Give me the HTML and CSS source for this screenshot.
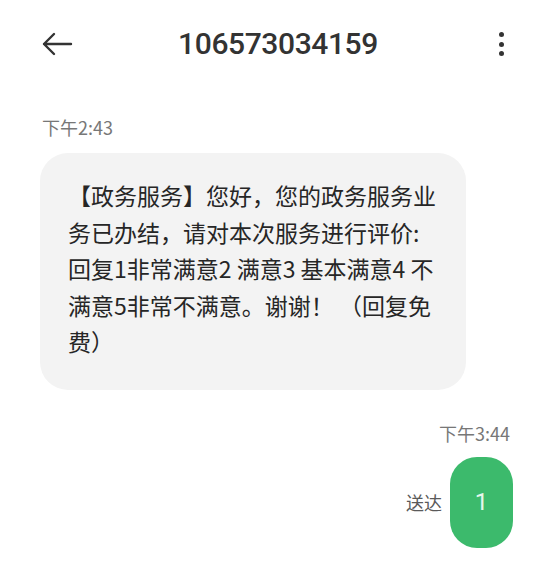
FILE: index.html
```html
<!DOCTYPE html>
<html lang="zh-CN">
<head>
<meta charset="utf-8">
<link rel="stylesheet" href="styles.css">
</head>
<body>
<div class="screen">
  <header class="header">
    <div class="back">
      <svg width="32" height="24" viewBox="0 0 32 24" aria-hidden="true">
        <path d="M30 12H3M13 2L3 12L13 22" fill="none" stroke="#333" stroke-width="2.4" stroke-linecap="round" stroke-linejoin="round"/>
      </svg>
    </div>
    <div class="title">106573034159</div>
    <div class="more">
      <span class="dot"></span><span class="dot"></span><span class="dot"></span>
    </div>
  </header>

  <div class="time time-left">下午2:43</div>
  <div class="bubble-in">【政务服务】您好，您的政务服务业务已办结，请对本次服务进行评价:回复1非常满意2 满意3 基本满意4 不满意5非常不满意。谢谢！ （回复免费）</div>

  <div class="time time-right">下午3:44</div>
  <div class="out-row">
    <span class="status">送达</span>
    <div class="bubble-out">1</div>
  </div>
</div>
</body>
</html>
```

FILE: styles.css
```css
* { box-sizing: border-box; }
html, body { margin: 0; padding: 0; background: #fff; }
body {
  font-family: "Noto Sans CJK SC", "Noto Sans", sans-serif;
  color: #222;
  width: 553px;
  height: 563px;
  overflow: hidden;
}
.screen { display: flex; flex-direction: column; }

.header {
  height: 88px;
  display: grid;
  grid-template-columns: 1fr auto 1fr;
  align-items: center;
  padding: 0 38px 0 41px;
}
.back { display: flex; align-items: center; justify-self: start; }
.back svg { display: block; }
.title {
  font-family: Roboto, "Liberation Sans", sans-serif;
  font-size: 30px;
  font-weight: 500;
  letter-spacing: -0.4px;
  color: #333;
  line-height: 1;
}
.more {
  justify-self: end;
  display: flex;
  flex-direction: column;
  gap: 4.5px;
  padding-right: 11px;
}
.dot {
  width: 5px;
  height: 5px;
  border-radius: 50%;
  background: #333;
}

.time {
  font-size: 18px;
  line-height: 24px;
  color: #777;
}
.time-left { margin: 27px 0 0 42px; }

.bubble-in {
  margin: 14px 0 0 40px;
  width: 426px;
  padding: 24px 28px 30px 28px;
  background: #f3f3f3;
  border-radius: 28px;
  font-size: 23px;
  line-height: 36.5px;
  color: #262626;
}

.time-right {
  margin: 31px 43px 0 0;
  align-self: flex-end;
}

.out-row {
  margin: 12px 40px 0 0;
  display: flex;
  justify-content: flex-end;
  align-items: center;
  gap: 8px;
}
.status {
  font-size: 18px;
  color: #5a5a5a;
}
.bubble-out {
  width: 63px;
  height: 91px;
  border-radius: 27px;
  background: #3cba6c;
  color: #e6f7ec;
  font-family: Roboto, "Noto Sans", sans-serif;
  font-size: 24px;
  display: flex;
  align-items: center;
  justify-content: center;
}
```
